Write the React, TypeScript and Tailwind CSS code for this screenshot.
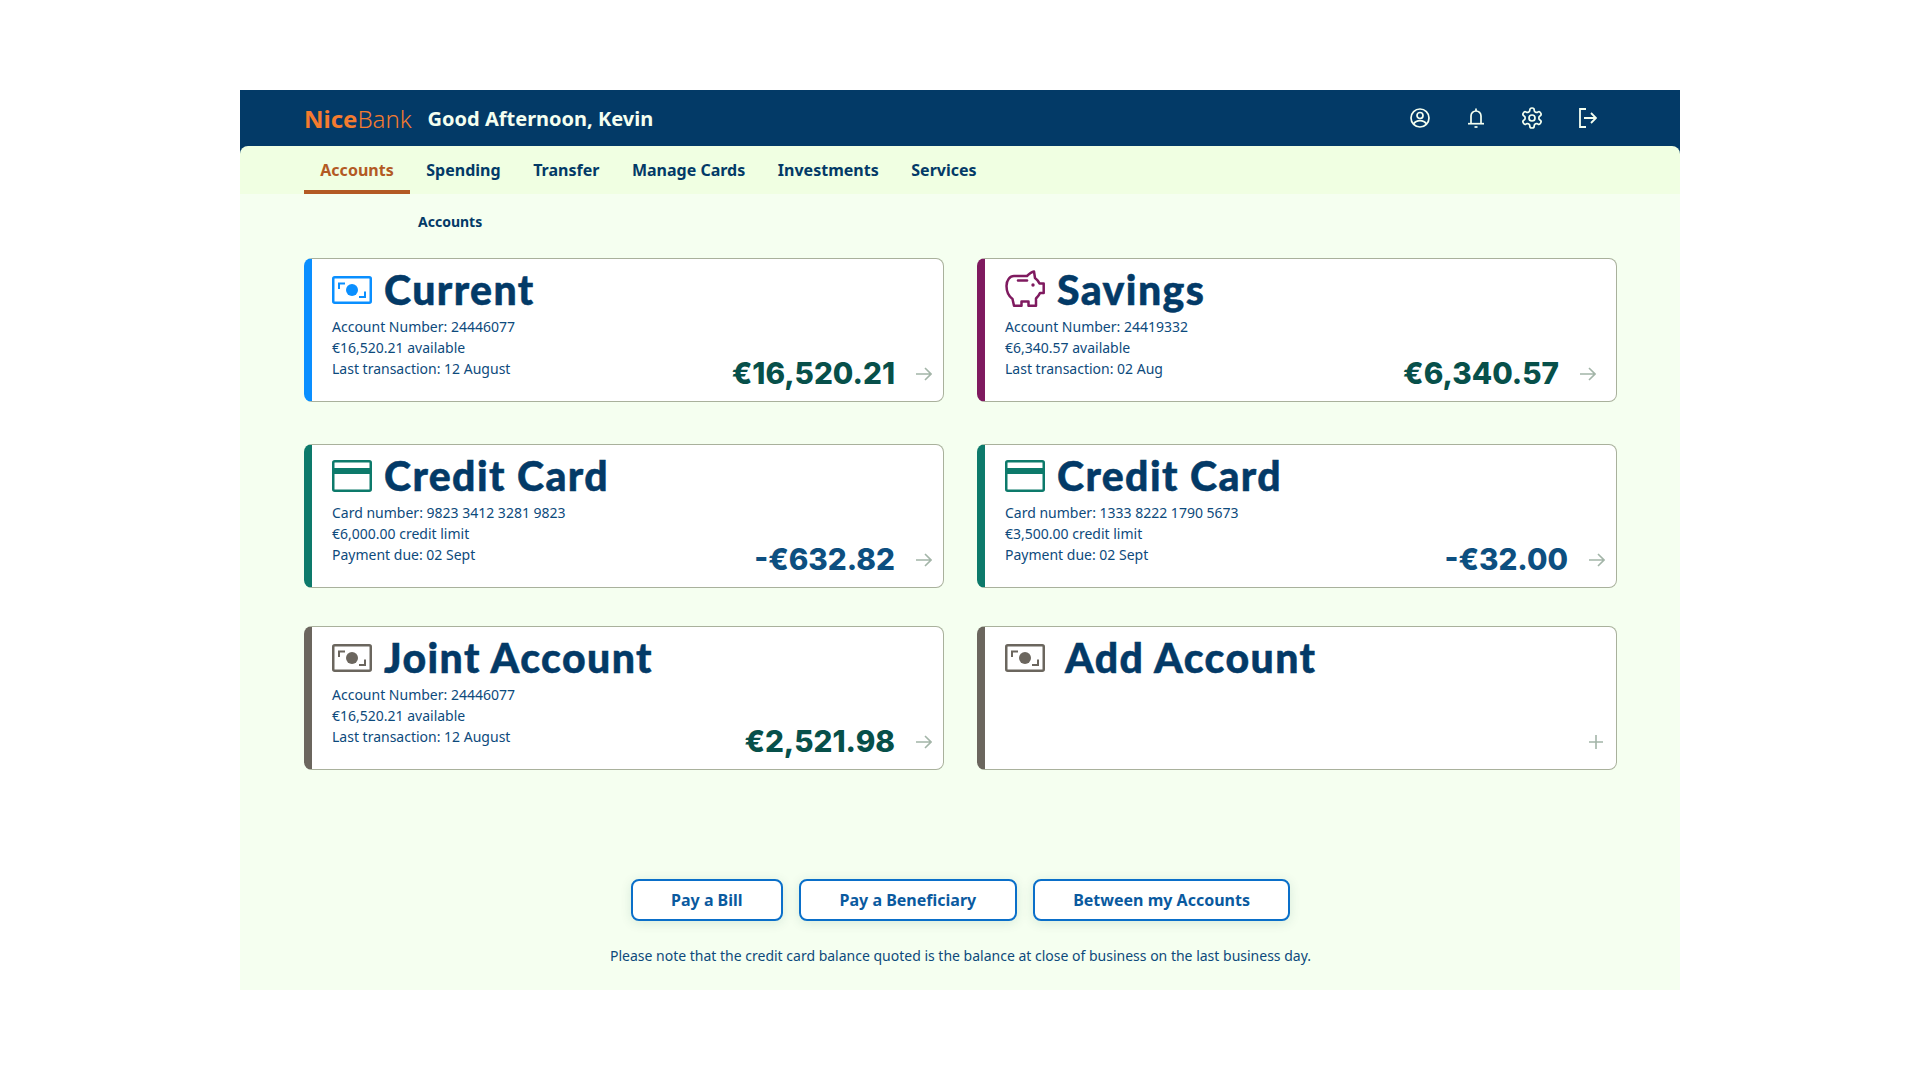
import React from "react";

function MoneyIcon({ color }: { color: string }) {
  return (
    <svg width="40" height="28" viewBox="0 0 40 28" fill="none" className="shrink-0">
      <rect x="1.25" y="1.25" width="37.5" height="25.5" rx="1.5" stroke={color} strokeWidth="2.5" />
      <circle cx="20" cy="14" r="6" fill={color} />
      <path d="M7 13V7.500h6M33 15.500V21h-6" stroke={color} strokeWidth="2" />
    </svg>
  );
}

function CardIcon({ color }: { color: string }) {
  return (
    <svg width="40" height="32" viewBox="0 0 40 32" fill="none" className="shrink-0">
      <rect x="1.25" y="1.25" width="37.5" height="29.5" rx="1.5" stroke={color} strokeWidth="2.5" />
      <rect x="1" y="8" width="38" height="6" fill={color} />
    </svg>
  );
}

function PiggyIcon({ color }: { color: string }) {
  return (
    <svg width="40" height="37" viewBox="0 0 40 37" fill="none" className="shrink-0 -mt-[3px]">
      <path
        d="M9 6H22C24 4 26 2 29 1.500L30 8C32 9.500 33.500 11 34.500 13.500H38.700V23H35C34 25.500 32 27.500 31 28.500V35.700H23.500V31.500H16.500V35.700H9L7.500 29C3.500 26 1.500 21 1.500 16C1.500 10 5 6 9 6Z"
        stroke={color}
        strokeWidth="2.500"
        strokeLinejoin="round"
      />
      <path d="M13 10.500h9" stroke={color} strokeWidth="2.500" strokeLinecap="round" />
      <circle cx="28" cy="15" r="1.700" fill={color} />
    </svg>
  );
}

function UserIcon() {
  return (
    <svg width="20" height="20" viewBox="0 0 20 20" fill="none" stroke="#f4fff0" strokeWidth="1.700" className="shrink-0">
      <circle cx="10" cy="10" r="9" />
      <circle cx="10" cy="7.500" r="3" />
      <path d="M3.500 16c1.500-2.200 3.800-3.300 6.500-3.300s5 1.100 6.500 3.300" />
    </svg>
  );
}

function BellIcon() {
  return (
    <svg width="16" height="20" viewBox="0 0 16 20" fill="none" stroke="#f4fff0" strokeWidth="1.700" className="shrink-0">
      <path d="M3 15.500V8a5 5 0 0 1 10 0v7.500" />
      <path d="M0 15.700h16" />
      <path d="M8 0.500v2.500" />
      <path d="M6.500 19h3" />
    </svg>
  );
}

function GearIcon() {
  return (
    <svg width="24" height="24" viewBox="0 0 24 24" fill="none" stroke="#f4fff0" strokeWidth="1.700" strokeLinejoin="round" className="shrink-0">
      <path d="M12.220 2h-.44a2 2 0 0 0-2 2v.18a2 2 0 0 1-1 1.730l-.43.25a2 2 0 0 1-2 0l-.15-.08a2 2 0 0 0-2.730.73l-.22.38a2 2 0 0 0 .73 2.730l.15.1a2 2 0 0 1 1 1.720v.51a2 2 0 0 1-1 1.740l-.15.09a2 2 0 0 0-.73 2.730l.22.38a2 2 0 0 0 2.730.73l.15-.08a2 2 0 0 1 2 0l.43.25a2 2 0 0 1 1 1.730V20a2 2 0 0 0 2 2h.44a2 2 0 0 0 2-2v-.18a2 2 0 0 1 1-1.730l.43-.25a2 2 0 0 1 2 0l.15.08a2 2 0 0 0 2.730-.73l.22-.39a2 2 0 0 0-.73-2.730l-.15-.08a2 2 0 0 1-1-1.740v-.5a2 2 0 0 1 1-1.740l.15-.09a2 2 0 0 0 .73-2.730l-.22-.38a2 2 0 0 0-2.730-.73l-.15.08a2 2 0 0 1-2 0l-.43-.25a2 2 0 0 1-1-1.730V4a2 2 0 0 0-2-2z" />
      <circle cx="12" cy="12" r="3" />
    </svg>
  );
}

function ExitIcon() {
  return (
    <svg width="18" height="20" viewBox="0 0 18 20" fill="none" stroke="#f4fff0" strokeWidth="1.800" className="shrink-0">
      <path d="M7 1H1v18h6" />
      <path d="M5 10h12M12 5l5 5-5 5" />
    </svg>
  );
}

function ArrowIcon() {
  return (
    <svg width="16" height="14" viewBox="0 0 16 14" fill="none" stroke="#a3b5a8" strokeWidth="1.600" className="shrink-0">
      <path d="M0 7h15M9 1l6 6-6 6" />
    </svg>
  );
}

function PlusIcon() {
  return (
    <svg width="14" height="14" viewBox="0 0 14 14" fill="none" stroke="#a3b5a8" strokeWidth="1.600" className="shrink-0">
      <path d="M7 0v14M0 7h14" />
    </svg>
  );
}

type CardProps = {
  bar: string;
  icon: React.ReactNode;
  title: string;
  lines: string[];
  amount?: string;
  amountClass?: string;
  trail?: React.ReactNode;
  pr: string;
  gap: string;
};

function Card({ bar, icon, title, lines, amount, amountClass, trail, pr, gap }: CardProps) {
  return (
    <div className={`flex h-[144px] w-[640px] rounded-lg border border-l-8 border-[#a9b19c] bg-white ${bar}`}>
      <div className="flex flex-1 flex-col pl-5 pt-[13px]">
        <div className={`flex h-[36px] items-center ${gap}`}>
          <div className="flex w-[40px] justify-center">{icon}</div>
          <div className="font-['Lato',sans-serif] text-[41px] leading-[36px] font-black tracking-[1.4px] [-webkit-text-stroke:0.5px_#033a67] text-[#033a67] whitespace-nowrap">
            {title}
          </div>
        </div>
        <div className="mt-[8px] text-[14px] leading-[21px] text-[#0d4a7c]">
          {lines.map((l) => (
            <div key={l}>{l}</div>
          ))}
        </div>
      </div>
      <div className={`flex items-center self-end pb-[7px] gap-[21px] ${pr}`}>
        {amount ? (
          <div className={`font-['Inter',sans-serif] text-[29.7px] leading-[40px] font-extrabold ${amountClass}`}>{amount}</div>
        ) : null}
        <div className="mt-[2px] flex h-[40px] items-center">{trail}</div>
      </div>
    </div>
  );
}

export default function App() {
  return (
    <div className="min-h-screen bg-white py-[90px] font-['Noto_Sans',sans-serif]">
      <div className="mx-auto flex h-[900px] w-[1440px] flex-col bg-[#f5fff0]">
        <div className="bg-[#033a67]">
          <div className="flex h-[56px] items-center justify-between pl-16 pr-[82px]">
            <div className="mt-[1px] flex items-center gap-4">
              <div className="text-[24px] leading-8 text-[#f47b2f]">
                <span className="font-bold">Nice</span>
                <span className="font-light">Bank</span>
              </div>
              <div className="text-[20px] leading-7 font-bold text-[#f4fff0]">Good Afternoon, Kevin</div>
            </div>
            <div className="flex items-center gap-9">
              <div className="flex w-5 justify-center"><UserIcon /></div>
              <div className="flex w-5 justify-center"><BellIcon /></div>
              <div className="flex w-5 justify-center"><GearIcon /></div>
              <div className="flex w-5 justify-center"><ExitIcon /></div>
            </div>
          </div>
          <div className="flex h-[48px] rounded-t-lg bg-[#f0ffe2] pl-16">
            {["Accounts", "Spending", "Transfer", "Manage Cards", "Investments", "Services"].map((t, i) => (
              <div
                key={t}
                className={`flex h-full items-center px-[16.3px] text-[16px] font-bold ${
                  i === 0 ? "border-y-4 border-t-transparent border-b-[#b35a24] text-[#b35a24]" : "text-[#033a67]"
                }`}
              >
                {t}
              </div>
            ))}
          </div>
        </div>
        <div className="flex flex-1 flex-col pl-16 pr-[63px]">
          <div className="pl-[114px] pt-[18px] text-[14px] leading-5 font-bold text-[#033a67]">Accounts</div>
          <div className="mt-[26px] flex flex-col">
            <div className="flex justify-between">
              <Card
                bar="border-l-[#0a8fff]"
                icon={<MoneyIcon color="#0a8fff" />}
                title="Current"
                lines={["Account Number: 24446077", "€16,520.21 available", "Last transaction: 12 August"]}
                amount="€16,520.21"
                amountClass="text-[#07504a]"
                trail={<ArrowIcon />}
                pr="pr-[11px]"
                gap="gap-3"
              />
              <Card
                bar="border-l-[#7f1a5f]"
                icon={<PiggyIcon color="#7f1a5f" />}
                title="Savings"
                lines={["Account Number: 24419332", "€6,340.57 available", "Last transaction: 02 Aug"]}
                amount="€6,340.57"
                amountClass="text-[#07504a]"
                trail={<ArrowIcon />}
                pr="pr-[20px]"
                gap="gap-3"
              />
            </div>
            <div className="mt-[42px] flex justify-between">
              <Card
                bar="border-l-[#0d7a6b]"
                icon={<CardIcon color="#0d7a6b" />}
                title="Credit Card"
                lines={["Card number: 9823 3412 3281 9823", "€6,000.00 credit limit", "Payment due: 02 Sept"]}
                amount="-€632.82"
                amountClass="text-[#0d4f80]"
                trail={<ArrowIcon />}
                pr="pr-[11px]"
                gap="gap-3"
              />
              <Card
                bar="border-l-[#0d7a6b]"
                icon={<CardIcon color="#0d7a6b" />}
                title="Credit Card"
                lines={["Card number: 1333 8222 1790 5673", "€3,500.00 credit limit", "Payment due: 02 Sept"]}
                amount="-€32.00"
                amountClass="text-[#0d4f80]"
                trail={<ArrowIcon />}
                pr="pr-[11px]"
                gap="gap-3"
              />
            </div>
            <div className="mt-[38px] flex justify-between">
              <Card
                bar="border-l-[#6b665e]"
                icon={<MoneyIcon color="#6b665e" />}
                title="Joint Account"
                lines={["Account Number: 24446077", "€16,520.21 available", "Last transaction: 12 August"]}
                amount="€2,521.98"
                amountClass="text-[#07504a]"
                trail={<ArrowIcon />}
                pr="pr-[11px]"
                gap="gap-3"
              />
              <Card
                bar="border-l-[#6b665e]"
                icon={<MoneyIcon color="#6b665e" />}
                title="Add Account"
                lines={[]}
                trail={<PlusIcon />}
                pr="pr-[13px]"
                gap="gap-5"
              />
            </div>
          </div>
          <div className="mt-[109px] flex justify-center gap-4">
            {["Pay a Bill", "Pay a Beneficiary", "Between my Accounts"].map((b, i) => (
              <button
                key={b}
                className={`h-[42px] rounded-lg border-2 border-[#0a6fc9] bg-white text-[16px] font-bold text-[#0a5a9f] shadow-[0_2px_12px_rgba(0,80,70,0.12)] ${
                  i === 1 ? "px-[39px]" : "px-[38px]"
                }`}
              >
                {b}
              </button>
            ))}
          </div>
          <div className="mt-[25px] text-center text-[14px] leading-5 text-[#0d4a7c]">
            Please note that the credit card balance quoted is the balance at close of business on the last business day.
          </div>
        </div>
      </div>
    </div>
  );
}
